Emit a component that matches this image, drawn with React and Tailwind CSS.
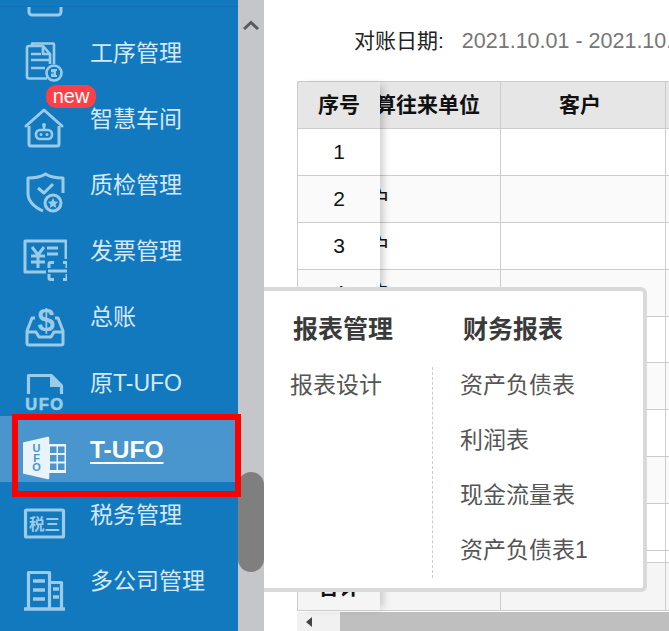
import React from "react";

const FONT = "font-['Liberation_Sans','Noto_Sans_CJK_SC',sans-serif]";

// sidebar icons, drawn on a 44x44 box
const IconBox = ({ children, active }) => (
  <svg
    viewBox="0 0 44 44"
    className={`w-[44px] h-[44px] shrink-0 ${active ? "text-[#e9f3fa]" : "text-[#9ccbe8]"}`}
    fill="none"
    stroke="currentColor"
    strokeWidth="2.6"
    strokeLinejoin="round"
  >
    {children}
  </svg>
);

const icons = {
  top: <path d="M6 28v10a3 3 0 0 0 3 3h26a3 3 0 0 0 3-3V28" strokeWidth="3" />,
  doc: (
    <>
      <path d="M9 5V3.500h21a1 1 0 0 1 1 1V24" />
      <path d="M24 38.500H6a2 2 0 0 1-2-2V8a2 2 0 0 1 2-2h14l7 8v10" />
      <path d="M20 6v8h7" />
      <path d="M8 14h10M8 20h18M8 28h14" />
      <circle cx="31" cy="33" r="7.500" fill="#1279bf" />
      <path d="M34 30h-5v1.500h3v3h-3V36h5" strokeWidth="2" />
    </>
  ),
  house: (
    <>
      <path d="M3 20 21 4l18 16" strokeLinecap="round" strokeWidth="3" />
      <path d="M6 20v18a2 2 0 0 0 2 2h26a2 2 0 0 0 2-2V20" strokeWidth="3" />
      <rect x="13" y="24" width="16" height="9" rx="4" />
      <circle cx="21" cy="19" r="2" fill="currentColor" stroke="none" />
      <path d="M21 20v4" />
      <circle cx="18" cy="28.500" r="1.500" fill="currentColor" stroke="none" />
      <circle cx="24" cy="28.500" r="1.500" fill="currentColor" stroke="none" />
    </>
  ),
  shield: (
    <>
      <path d="M40 21V6C33 6 27 5 22.500 2 18 5 12 6 5 6v15c0 8 6 14 15 18" strokeWidth="3" />
      <path d="m15 16 6 5 9-9" strokeWidth="3" />
      <circle cx="30" cy="31" r="8" fill="#1279bf" strokeWidth="3" />
      <path d="m30 26 1.600 3.400 3.600.4-2.700 2.500.8 3.600-3.300-1.900-3.300 1.900.8-3.600-2.700-2.500 3.600-.4z" fill="currentColor" stroke="none" />
    </>
  ),
  invoice: (
    <>
      <path d="M23 34H2V3h41v18" strokeWidth="3" />
      <path d="m9 9 6 8 6-8M8 18h14M8 24h14M15 17v13" strokeWidth="3" />
      <path d="M24 10h11M24 16h11" strokeWidth="3" />
      <path d="M26 30v-4a1.500 1.500 0 0 1 1.500-1.500H31M40 24.500h3a1.500 1.500 0 0 1 1 1.500v4M26 36v4a1.500 1.500 0 0 0 1.500 1.500H31M40 41.500h3a1.500 1.500 0 0 0 1-1.500v-4M25 33h19" strokeWidth="3" />
    </>
  ),
  tray: (
    <>
      <text x="23" y="27" textAnchor="middle" fontFamily="Liberation Sans" fontWeight="700" fontSize="31" fill="currentColor" stroke="none">$</text>
      <path d="M12 14H9L4 27v12a2 2 0 0 0 2 2h32a2 2 0 0 0 2-2V27l-5-13h-3" strokeWidth="3" />
      <path d="M4 28h9l3 5h12l3-5h9" strokeWidth="3" />
    </>
  ),
  ufoDoc: (
    <>
      <path d="M5.500 24V5.500H27M38.500 17v7" strokeWidth="3.200" />
      <path d="M27 4h2l11 11v2H27z" fill="currentColor" stroke="none" />
      <text x="22" y="40" textAnchor="middle" fontFamily="Liberation Sans" fontWeight="700" fontSize="16.500" letterSpacing="1.500" fill="currentColor" stroke="currentColor" strokeWidth="0.600">UFO</text>
    </>
  ),
  ufoBuilding: (
    <>
      <path d="M1 7.500 25 2v40L1 36.500z" fill="currentColor" stroke="currentColor" />
      <text x="13.500" y="16" textAnchor="middle" fontFamily="Liberation Sans" fontWeight="700" fontSize="11" fill="#4896cd" stroke="none">U</text>
      <text x="13.500" y="25.500" textAnchor="middle" fontFamily="Liberation Sans" fontWeight="700" fontSize="11" fill="#4896cd" stroke="none">F</text>
      <text x="13.500" y="35" textAnchor="middle" fontFamily="Liberation Sans" fontWeight="700" fontSize="11" fill="#4896cd" stroke="none">O</text>
      <path d="M25 8h18v29H25z" fill="currentColor" stroke="none" />
      <path d="M27 10.500h6.500v6.500H27zM35 10.500h6.500v6.500H35zM27 19h6.500v6.500H27zM35 19h6.500v6.500H35zM27 27.500h6.500V34H27zM35 27.500h6.500V34H35z" fill="#4896cd" stroke="none" />
    </>
  ),
  tax: (
    <>
      <rect x="2.500" y="8" width="38" height="27" rx="1" strokeWidth="3.200" />
      <text x="21.500" y="27.500" textAnchor="middle" fontFamily="Noto Sans CJK SC" fontWeight="700" fontSize="15.500" fill="currentColor" stroke="none">税三</text>
    </>
  ),
  building: (
    <>
      <path d="M5.500 40V4.500h21V40M26.500 14.500h12V40" strokeWidth="3.200" />
      <path d="M1 41h41" strokeWidth="3.500" />
      <path d="M10 13h12M10 22h12M10 31h12M30 21h6M30 29h6" strokeWidth="3.500" />
    </>
  ),
};

const menu = [
  { label: "", icon: "top" },
  { label: "工序管理", icon: "doc" },
  { label: "智慧车间", icon: "house", badge: true },
  { label: "质检管理", icon: "shield" },
  { label: "发票管理", icon: "invoice" },
  { label: "总账", icon: "tray" },
  { label: "原T-UFO", icon: "ufoDoc" },
  { label: "T-UFO", icon: "ufoBuilding", active: true },
  { label: "税务管理", icon: "tax" },
  { label: "多公司管理", icon: "building" },
];

function MenuRow({ item }) {
  return (
    <div
      className={`relative flex items-start h-[66px] pl-[23px] shrink-0 ${item.active ? "bg-[#4896cd]" : ""}`}
    >
      <div className="mt-[20px]">
        <IconBox active={item.active}>{icons[item.icon]}</IconBox>
      </div>
      <span
        className={`ml-[23px] leading-[67px] whitespace-nowrap ${
          item.active
            ? "text-white text-[24.500px] font-bold underline underline-offset-[4px]"
            : "text-[#d5e8f5] text-[23px]"
        }`}
      >
        {item.label}
      </span>
      {item.badge && (
        <span className="absolute left-[46px] -top-[1px] w-[50px] h-[23px] rounded-[10px] bg-[#ff3f45] text-white text-[20px] leading-[22px] text-center">
          new
        </span>
      )}
    </div>
  );
}

function Sidebar() {
  return (
    <div className="w-[238px] h-full bg-[#1279bf] shrink-0 overflow-hidden">
      <div className="h-[7px] bg-[#1279bf] border-b border-[#1173b5] relative z-10" />
      <div className="-mt-[53px]">
        {menu.map((item, i) => (
          <MenuRow key={i} item={item} />
        ))}
      </div>
    </div>
  );
}

function ScrollTrack() {
  return (
    <div className="w-[26px] h-full bg-[#c4c6ca] shrink-0 flex flex-col items-center">
      <svg viewBox="0 0 16 10" className="w-[16px] h-[10px] mt-[20px] text-[#5b5b5b]" fill="none" stroke="currentColor" strokeWidth="3">
        <path d="m1 9 7-6.500L15 9" />
      </svg>
      <div className="w-[26px] h-[100px] mt-[442px] rounded-[13px] bg-[#7f7f7f]" />
    </div>
  );
}

const rows = [1, 2, 3, 4, 5, 6, 7, 8, 9];

function Table() {
  return (
    <div className="ml-[33px] mt-[23px] w-[400px]">
      <div className="flex text-[21px] text-[#111] border-t border-[#ccc]">
        {/* fixed column */}
        <div className="w-[83px] shrink-0 border-l border-[#ccc] relative z-10 bg-white shadow-[6px_0_8px_-3px_rgba(0,0,0,0.2)]">
          <div className="h-[47px] bg-[#e6e6e6] border-b border-[#ccc] flex items-center justify-center font-bold">
            序号
          </div>
          {rows.map((n) => (
            <div
              key={n}
              className={`h-[46.9px] border-b border-[#ccc] flex items-center justify-center ${n % 2 === 0 ? "bg-[#fafafa]" : "bg-white"}`}
            >
              {n}
            </div>
          ))}
          <div className="h-[11px] bg-white" />
          <div className="h-[49px] bg-[#f5f5f5] border-y border-[#ccc] flex items-center justify-center font-bold">
            合计
          </div>
        </div>
        {/* scrolled columns */}
        <div className="flex-1 min-w-0">
          <div className="flex h-[47px] bg-[#e6e6e6] border-b border-[#ccc] font-bold">
            <div className="w-[121px] shrink-0 border-r border-[#ccc] overflow-hidden flex items-center justify-end pr-[20px] whitespace-nowrap">
              结算往来单位
            </div>
            <div className="w-[165px] shrink-0 border-r border-[#ccc] flex items-center justify-center pr-[6px]">
              客户
            </div>
            <div className="flex-1" />
          </div>
          {rows.map((n) => (
            <div
              key={n}
              className={`flex h-[46.9px] border-b border-[#ccc] ${n % 2 === 0 ? "bg-[#fafafa]" : "bg-white"}`}
            >
              <div className="w-[121px] shrink-0 border-r border-[#ccc] overflow-hidden flex items-center">
                {n > 1 && <span className="-ml-[11px]">户</span>}
              </div>
              <div className="w-[165px] shrink-0 border-r border-[#ccc]" />
              <div className="flex-1" />
            </div>
          ))}
          <div className="h-[11px] flex">
            <div className="w-[121px] shrink-0 border-r border-[#ccc]" />
            <div className="w-[165px] shrink-0 border-r border-[#ccc]" />
          </div>
          <div className="flex h-[49px] bg-[#f5f5f5] border-y border-[#ccc]">
            <div className="w-[121px] shrink-0 border-r border-[#ccc]" />
            <div className="w-[165px] shrink-0 border-r border-[#ccc]" />
          </div>
        </div>
      </div>
      {/* horizontal scrollbar */}
      <div className="flex h-[19px] mt-[1px] bg-[#bfbfbf]">
        <div className="w-[43px] bg-[#f1f1f1] flex items-center pl-[9px]">
          <svg viewBox="0 0 6 10" className="w-[6px] h-[10px] text-[#444]" fill="currentColor">
            <path d="M6 0v10L0 5z" />
          </svg>
        </div>
      </div>
    </div>
  );
}

function Popup() {
  const design = ["报表设计"];
  const finance = ["资产负债表", "利润表", "现金流量表", "资产负债表1"];
  return (
    <div className="absolute left-[264px] top-[287px] w-[383px] h-[305px] bg-white border-4 border-l-0 border-[#d9d9d9] rounded-r-[6px] z-20">
      <div className="flex mt-[19px] h-[40px] items-center text-[25px] font-bold text-[#3a3a3a]">
        <div className="w-[199px] pl-[29px]">报表管理</div>
        <div>财务报表</div>
      </div>
      <div className="flex mt-[17px] text-[23px] text-[#555]">
        <div className="w-[169px] h-[211px] pl-[26px] border-r border-dashed border-[#ccc] flex flex-col gap-[19px]">
          {design.map((t) => (
            <div key={t} className="h-[36px] leading-[36px]">{t}</div>
          ))}
        </div>
        <div className="pl-[27px] flex flex-col gap-[19px]">
          {finance.map((t) => (
            <div key={t} className="h-[36px] leading-[36px]">{t}</div>
          ))}
        </div>
      </div>
    </div>
  );
}

export default function App() {
  return (
    <div className={`relative w-[669px] h-[631px] overflow-hidden flex bg-white ${FONT}`}>
      <Sidebar />
      <ScrollTrack />
      <div className="flex-1 min-w-0 overflow-hidden">
        <div className="h-[58px] pt-[24px] pl-[90px] flex items-center whitespace-nowrap leading-[32px]">
          <span className="text-[#222] text-[21px]">对账日期:</span>
          <span className="text-[#777] ml-[18px] text-[21.5px]">2021.10.01 - 2021.10.31</span>
        </div>
        <Table />
      </div>
      <Popup />
      {/* red highlight around the active menu row */}
      <div className="absolute left-[12px] top-[414px] w-[229px] h-[83px] border-[6px] border-[#ff0000] z-30" />
    </div>
  );
}
